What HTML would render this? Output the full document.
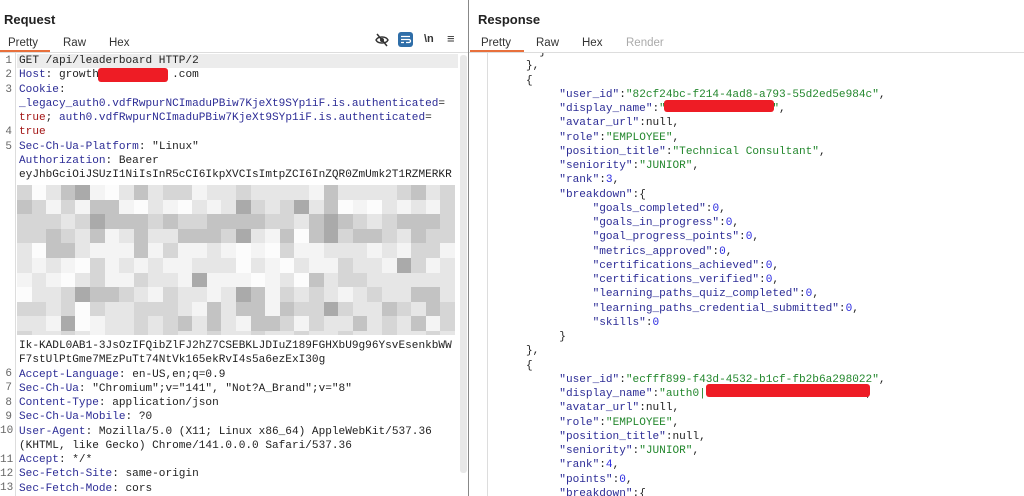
<!DOCTYPE html>
<html><head><meta charset="utf-8"><style>
*{margin:0;padding:0;box-sizing:border-box}
body{width:1024px;height:496px;background:#fff;position:relative;overflow:hidden;font-family:"Liberation Sans",sans-serif}
.h{position:absolute;top:12px;font-size:13px;font-weight:bold;color:#222}
.tab{position:absolute;top:37px;font-size:11.5px;color:#333}
.code{position:absolute;font-family:"Liberation Mono",monospace;font-size:11.1px;line-height:14.25px;white-space:pre;color:#222}
.ln{position:absolute;left:0;width:12px;text-align:right;font-family:"Liberation Mono",monospace;font-size:11px;color:#666}
.k{color:#2c2c96}.r{color:#a31515}.s{color:#23872d}.n{color:#2a2ae0}
.red{position:absolute;background:#ee1c25;border-radius:3px}
.mos{position:absolute;left:17px;top:185px;width:438px;height:150px;display:grid;grid-template-columns:repeat(30,1fr);grid-auto-rows:14.6px;overflow:hidden}
.mos i{display:block}
.a{background:#f4f4f4}.b{background:#e6e6e6}.c{background:#d6d6d6}.d{background:#c3c3c3}.e{background:#aaa}.f{background:#fcfcfc}
</style></head><body>
<div class="h" style="left:4px">Request</div>
<div class="tab" style="left:8px">Pretty</div>
<div class="tab" style="left:63px">Raw</div>
<div class="tab" style="left:109px">Hex</div>
<div style="position:absolute;left:0;top:50px;width:50px;height:2px;background:#e8703c"></div>
<div style="position:absolute;left:0;top:52px;width:1024px;height:1px;background:#ddd"></div>
<!-- icons -->
<svg style="position:absolute;left:375px;top:33px" width="14" height="14" viewBox="0 0 14 14"><path d="M1 7c2-4 10-4 12 0c-2 4-10 4-12 0z" fill="none" stroke="#333" stroke-width="1.4"/><circle cx="7" cy="7" r="2" fill="#333"/><path d="M2 1l10 12" stroke="#333" stroke-width="1.5"/></svg>
<div style="position:absolute;left:398px;top:32px;width:15px;height:15px;background:#2f6ea8;border-radius:3px"></div>
<svg style="position:absolute;left:398px;top:32px" width="15" height="15"><path d="M3 4.5h9M3 7.5h8a1.5 1.5 0 0 1 0 3H8M3 10.5h3" stroke="#fff" stroke-width="1.3" fill="none"/></svg>
<div style="position:absolute;left:424px;top:33px;font-size:11px;font-weight:bold;color:#333">\n</div>
<div style="position:absolute;left:447px;top:31px;font-size:13px;color:#333">≡</div>
<div style="position:absolute;left:468px;top:0;width:1px;height:496px;background:#888"></div>
<div style="position:absolute;left:15px;top:53px;width:1px;height:443px;background:#ddd"></div>
<div style="position:absolute;left:17px;top:54px;width:441px;height:14px;background:#ececec"></div>
<div style="position:absolute;left:460px;top:55px;width:7px;height:418px;background:#e8e8e8;border-radius:3px"></div>
<div class="ln" style="top:54px;line-height:14.25px">1<br>2<br>3<br><br><br>4<br>5</div>
<div class="ln" style="top:367px;line-height:14.25px">6<br>7<br>8<br>9<br>10<br><br>11<br>12<br>13</div>
<div class="code" style="left:19px;top:54px">GET /api/leaderboard HTTP/2
<span class="k">Host</span>: growth           .com
<span class="k">Cookie</span>:
<span class="k">_legacy_auth0.vdfRwpurNCImaduPBiw7KjeXt9SYp1iF.is.authenticated</span>=
<span class="r">true</span>; <span class="k">auth0.vdfRwpurNCImaduPBiw7KjeXt9SYp1iF.is.authenticated</span>=
<span class="r">true</span>
<span class="k">Sec-Ch-Ua-Platform</span>: "Linux"
<span class="k">Authorization</span>: Bearer
eyJhbGciOiJSUzI1NiIsInR5cCI6IkpXVCIsImtpZCI6InZQR0ZmUmk2T1RZMERKR</div>
<div class="code" style="left:19px;top:339px">Ik-KADL0AB1-3JsOzIFQibZlFJ2hZ7CSEBKLJDIuZ189FGHXbU9g96YsvEsenkbWW
F7stUlPtGme7MEzPuTt74NtVk165ekRvI4s5a6ezExI30g
<span class="k">Accept-Language</span>: en-US,en;q=0.9
<span class="k">Sec-Ch-Ua</span>: "Chromium";v="141", "Not?A_Brand";v="8"
<span class="k">Content-Type</span>: application/json
<span class="k">Sec-Ch-Ua-Mobile</span>: ?0
<span class="k">User-Agent</span>: Mozilla/5.0 (X11; Linux x86_64) AppleWebKit/537.36
(KHTML, like Gecko) Chrome/141.0.0.0 Safari/537.36
<span class="k">Accept</span>: */*
<span class="k">Sec-Fetch-Site</span>: same-origin
<span class="k">Sec-Fetch-Mode</span>: cors</div>
<div class="red" style="left:98px;top:68px;width:70px;height:14px"></div>
<div class="mos">
<i class=c></i><i class=f></i><i class=b></i><i class=d></i><i class=e></i><i class=a></i><i class=f></i><i class=b></i><i class=d></i><i class=b></i><i class=c></i><i class=c></i><i class=a></i><i class=b></i><i class=b></i><i class=c></i><i class=b></i><i class=b></i><i class=b></i><i class=b></i><i class=a></i><i class=d></i><i class=b></i><i class=b></i><i class=b></i><i class=b></i><i class=c></i><i class=d></i><i class=b></i><i class=c></i>
<i class=d></i><i class=c></i><i class=a></i><i class=c></i><i class=a></i><i class=d></i><i class=d></i><i class=a></i><i class=f></i><i class=b></i><i class=a></i><i class=f></i><i class=b></i><i class=a></i><i class=b></i><i class=e></i><i class=c></i><i class=b></i><i class=c></i><i class=e></i><i class=b></i><i class=d></i><i class=f></i><i class=a></i><i class=f></i><i class=b></i><i class=a></i><i class=b></i><i class=a></i><i class=c></i>
<i class=c></i><i class=c></i><i class=c></i><i class=b></i><i class=c></i><i class=e></i><i class=d></i><i class=d></i><i class=d></i><i class=c></i><i class=d></i><i class=c></i><i class=c></i><i class=d></i><i class=d></i><i class=d></i><i class=d></i><i class=c></i><i class=c></i><i class=b></i><i class=d></i><i class=e></i><i class=d></i><i class=c></i><i class=b></i><i class=c></i><i class=d></i><i class=d></i><i class=d></i><i class=c></i>
<i class=c></i><i class=c></i><i class=d></i><i class=c></i><i class=b></i><i class=d></i><i class=a></i><i class=b></i><i class=d></i><i class=b></i><i class=b></i><i class=d></i><i class=d></i><i class=d></i><i class=c></i><i class=e></i><i class=b></i><i class=a></i><i class=d></i><i class=f></i><i class=d></i><i class=e></i><i class=c></i><i class=d></i><i class=d></i><i class=c></i><i class=b></i><i class=d></i><i class=c></i><i class=c></i>
<i class=b></i><i class=f></i><i class=d></i><i class=d></i><i class=b></i><i class=a></i><i class=a></i><i class=a></i><i class=d></i><i class=a></i><i class=c></i><i class=a></i><i class=a></i><i class=b></i><i class=a></i><i class=f></i><i class=a></i><i class=f></i><i class=c></i><i class=a></i><i class=a></i><i class=b></i><i class=b></i><i class=b></i><i class=a></i><i class=b></i><i class=a></i><i class=c></i><i class=c></i><i class=a></i>
<i class=b></i><i class=a></i><i class=b></i><i class=a></i><i class=f></i><i class=c></i><i class=a></i><i class=b></i><i class=a></i><i class=b></i><i class=a></i><i class=a></i><i class=b></i><i class=b></i><i class=b></i><i class=f></i><i class=b></i><i class=a></i><i class=f></i><i class=b></i><i class=a></i><i class=a></i><i class=c></i><i class=b></i><i class=b></i><i class=a></i><i class=e></i><i class=c></i><i class=a></i><i class=b></i>
<i class=a></i><i class=b></i><i class=a></i><i class=f></i><i class=b></i><i class=c></i><i class=a></i><i class=a></i><i class=c></i><i class=b></i><i class=b></i><i class=a></i><i class=e></i><i class=a></i><i class=a></i><i class=a></i><i class=f></i><i class=a></i><i class=b></i><i class=f></i><i class=d></i><i class=b></i><i class=c></i><i class=c></i><i class=b></i><i class=b></i><i class=b></i><i class=b></i><i class=b></i><i class=b></i>
<i class=f></i><i class=b></i><i class=b></i><i class=c></i><i class=e></i><i class=d></i><i class=d></i><i class=c></i><i class=b></i><i class=a></i><i class=c></i><i class=b></i><i class=b></i><i class=a></i><i class=b></i><i class=e></i><i class=d></i><i class=a></i><i class=c></i><i class=b></i><i class=c></i><i class=b></i><i class=a></i><i class=b></i><i class=c></i><i class=b></i><i class=b></i><i class=d></i><i class=d></i><i class=b></i>
<i class=c></i><i class=c></i><i class=b></i><i class=c></i><i class=f></i><i class=c></i><i class=b></i><i class=b></i><i class=c></i><i class=c></i><i class=c></i><i class=b></i><i class=a></i><i class=d></i><i class=b></i><i class=d></i><i class=d></i><i class=a></i><i class=d></i><i class=c></i><i class=c></i><i class=e></i><i class=c></i><i class=b></i><i class=b></i><i class=d></i><i class=c></i><i class=b></i><i class=d></i><i class=c></i>
<i class=b></i><i class=b></i><i class=a></i><i class=e></i><i class=f></i><i class=a></i><i class=b></i><i class=b></i><i class=c></i><i class=b></i><i class=c></i><i class=d></i><i class=b></i><i class=d></i><i class=b></i><i class=a></i><i class=d></i><i class=d></i><i class=c></i><i class=a></i><i class=c></i><i class=b></i><i class=b></i><i class=d></i><i class=b></i><i class=c></i><i class=b></i><i class=d></i><i class=a></i><i class=c></i>
<i class=c></i><i class=b></i><i class=b></i><i class=c></i><i class=b></i><i class=a></i><i class=b></i><i class=b></i><i class=c></i><i class=b></i><i class=c></i><i class=b></i><i class=b></i><i class=c></i><i class=b></i><i class=b></i><i class=c></i><i class=b></i><i class=b></i><i class=c></i><i class=b></i><i class=b></i><i class=c></i><i class=b></i><i class=b></i><i class=c></i><i class=b></i><i class=b></i><i class=c></i><i class=b></i>
</div>

<div class="h" style="left:478px">Response</div>
<div class="tab" style="left:481px">Pretty</div>
<div class="tab" style="left:536px">Raw</div>
<div class="tab" style="left:582px">Hex</div>
<div class="tab" style="left:626px;color:#aaa">Render</div>
<div style="position:absolute;left:470px;top:50px;width:54px;height:2px;background:#e8703c"></div>
<div style="position:absolute;left:487px;top:53px;width:1px;height:443px;background:#ddd"></div>
<div style="position:absolute;left:470px;top:53px;width:554px;height:443px;overflow:hidden">
<div class="code" style="left:56px;top:-8px">  }
},
{
     <span class="k">"user_id"</span>:<span class="s">"82cf24bc-f214-4ad8-a793-55d2ed5e984c"</span>,
     <span class="k">"display_name"</span>:<span class="s">"                "</span>,
     <span class="k">"avatar_url"</span>:null,
     <span class="k">"role"</span>:<span class="s">"EMPLOYEE"</span>,
     <span class="k">"position_title"</span>:<span class="s">"Technical Consultant"</span>,
     <span class="k">"seniority"</span>:<span class="s">"JUNIOR"</span>,
     <span class="k">"rank"</span>:<span class="n">3</span>,
     <span class="k">"breakdown"</span>:{
          <span class="k">"goals_completed"</span>:<span class="n">0</span>,
          <span class="k">"goals_in_progress"</span>:<span class="n">0</span>,
          <span class="k">"goal_progress_points"</span>:<span class="n">0</span>,
          <span class="k">"metrics_approved"</span>:<span class="n">0</span>,
          <span class="k">"certifications_achieved"</span>:<span class="n">0</span>,
          <span class="k">"certifications_verified"</span>:<span class="n">0</span>,
          <span class="k">"learning_paths_quiz_completed"</span>:<span class="n">0</span>,
          <span class="k">"learning_paths_credential_submitted"</span>:<span class="n">0</span>,
          <span class="k">"skills"</span>:<span class="n">0</span>
     }
},
{
     <span class="k">"user_id"</span>:<span class="s">"ecfff899-f43d-4532-b1cf-fb2b6a298022"</span>,
     <span class="k">"display_name"</span>:<span class="s">"auth0|                        </span>,
     <span class="k">"avatar_url"</span>:null,
     <span class="k">"role"</span>:<span class="s">"EMPLOYEE"</span>,
     <span class="k">"position_title"</span>:null,
     <span class="k">"seniority"</span>:<span class="s">"JUNIOR"</span>,
     <span class="k">"rank"</span>:<span class="n">4</span>,
     <span class="k">"points"</span>:<span class="n">0</span>,
     <span class="k">"breakdown"</span>:{</div>
</div>
<div class="red" style="left:664px;top:100px;width:110px;height:12px"></div>
<div class="red" style="left:706px;top:384px;width:164px;height:13px"></div>
</body></html>
